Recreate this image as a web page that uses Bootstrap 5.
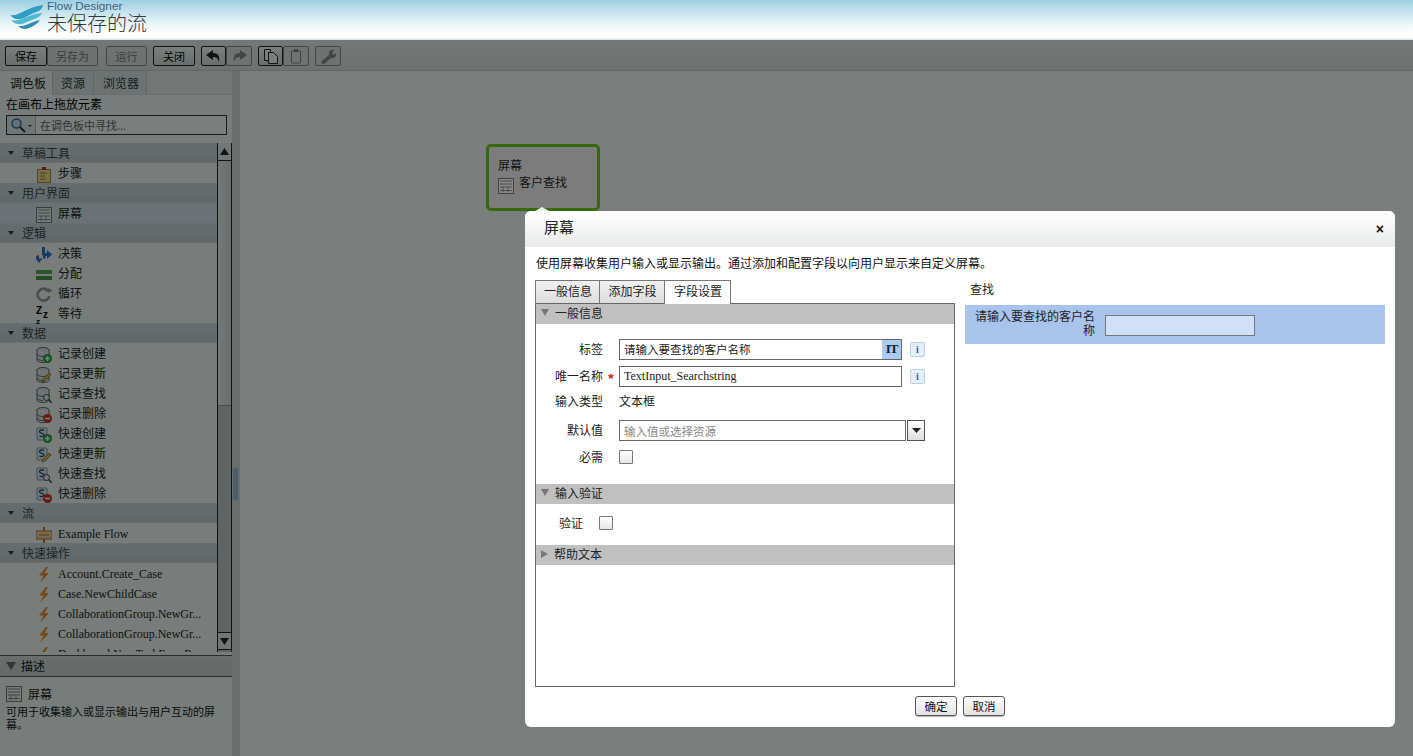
<!doctype html>
<html lang="zh">
<head>
<meta charset="utf-8">
<title>Flow Designer</title>
<link href="https://cdn.jsdelivr.net/npm/bootstrap@5.3.0/dist/css/bootstrap.min.css" rel="stylesheet">
<style>
html,body{height:756px;overflow:hidden}
body{background:#fff;font:12px/1.3 "Liberation Serif","Noto Sans CJK SC",serif;color:#111;position:relative}
.fd-head{height:40px;background:linear-gradient(#9ccfe2 0,#c5e3ee 12px,#f4fafc 28px,#fff 34px,#fff 38px,#c9dce6 40px)}
.fd-logo{margin:4px 4px 0 9px}
.fd-brand{font:11.8px/12px "Liberation Sans",sans-serif;color:#3d5f80}
.fd-title{font:300 20px/22px "Noto Sans CJK SC",sans-serif;color:#33383c}
.fd-overlay{position:absolute;left:0;right:0;top:40px;bottom:0;background:rgba(0,8,4,.52);z-index:4}
.fd-bar{height:31px;padding:6px 0 0 5px;background:linear-gradient(#f2f2f2,#e4e6e6);border-bottom:1px solid #ccc;gap:6px}
.fd-tb{height:20px;width:25px;padding:0;border:1px solid #222;border-radius:2px;background:linear-gradient(#fff,#ddd);font:11px/18px "Noto Sans CJK SC",sans-serif;color:#000;display:flex;align-items:center;justify-content:center}
.fd-tb.is-off{border-color:#8a8a8a;color:#777;background:#e6e6e6}
.fd-tb.fd-tbw{width:42px}.fd-tb.fd-tbx{width:51px}
.fd-tb.fd-tbn{width:26px}
.fd-tb.fd-run{margin-left:2px;width:41px}
.fd-side{width:232px;height:685px;background:#fafafa;flex:none}
.fd-split{width:8px;background:#dcdcdc;position:relative;flex:none}
.fd-grip{position:absolute;left:1px;top:397px;width:5px;height:32px;background:#9dbbdb;border-radius:2px}
.fd-canvas{flex:1;background:#fff}
.fd-tabs{height:24px;background:#eef0f0;border-bottom:1px solid #ddd}
.fd-tab{padding-top:4px;white-space:nowrap;font-size:12px;line-height:16px;color:#333;background:#e3e8ec;border-right:1px solid #ccc;font-family:"Noto Sans CJK SC",sans-serif}
.fd-tab.is-on{background:#fafafa;color:#222;width:53px;padding-left:10px;height:24px}
.fd-tab.fd-t2{width:41px;padding-left:8px}
.fd-tab.fd-t3{width:53px;padding-left:9px}
.fd-hint{height:19px;padding-left:6px;font:12px/18px "Noto Sans CJK SC",sans-serif;color:#000}
.fd-search{margin:1px 0 0 6px;width:221px;height:20px;border:1px solid #333;background:#fff;color:#666;font:11px/18px "Noto Sans CJK SC",sans-serif}
.fd-sico{width:29px;height:18px;background:#e8eef3;border-right:1px solid #bbb;padding-left:3px;flex:none}
.fd-palette{margin-top:8px;height:509px;overflow:hidden;position:relative}
.fd-plist{width:217px;height:509px;overflow:hidden}
.fd-sec{height:20px;background:linear-gradient(#d5dde6,#c9d1d9);border-bottom:1px solid #ddd;font:12px/19px "Noto Sans CJK SC",sans-serif;color:#444;padding-left:8px;gap:6px}
.fd-tri{width:0;height:0;border:3px solid transparent;border-top:4px solid #333;border-bottom:0;margin-right:2px}
.fd-row{height:20px;padding:3px 0 0 36px;font:12px/17px "Liberation Serif","Noto Sans CJK SC",serif;color:#222;white-space:nowrap}
.fd-row.is-sel{background:#dde7f1}
.fd-row svg{width:16px;height:16px;margin-right:6px;flex:none;overflow:visible}
.fd-row span{overflow:hidden;text-overflow:ellipsis}
.fd-sb{position:absolute;right:0;top:0;width:15px;height:509px;background:#c8c8c8;border-left:1px solid #222;border-right:1px solid #222}
.fd-sb-btn{height:18px;background:#eee;border-bottom:1px solid #222;display:flex;align-items:center;justify-content:center}
.fd-sb-thumb{height:245px;background:linear-gradient(90deg,#f4f4f4,#ddd);border-bottom:1px solid #999}
.fd-sb-dn{position:absolute;left:0;right:0;bottom:2px;border-top:1px solid #222;border-bottom:1px solid #222}
.fd-desch{height:22px;margin-top:3px;background:linear-gradient(#ddd,#cfd4d8);border-top:1px solid #555;border-bottom:1px solid #555;font:12px/20px "Noto Sans CJK SC",sans-serif;padding-left:6px;gap:5px;color:#111}
.fd-dtri{width:0;height:0;border:5px solid transparent;border-top:8px solid #666;border-bottom:0}
.fd-desc{padding:9px 6px 0;font:11px/13px "Noto Sans CJK SC",sans-serif;color:#111}
.fd-desc b{font-weight:400;font-size:12px;line-height:16px}
.fd-dtxt{margin-top:3px}
.fd-dgap{gap:6px}
.fd-node{position:absolute;left:486px;top:144px;width:114px;height:67px;border:3px solid #35680f;border-radius:5px;background:#7d7c7c;z-index:5;font:12px/14px "Noto Sans CJK SC",sans-serif;color:#111;padding:11px 0 0 9px}
.fd-node svg{filter:brightness(.55);margin-top:6px}
.fd-nsub{gap:5px;line-height:12px}
.fd-nsub span{margin-top:4px}
.fd-modal{position:absolute;left:525px;top:211px;width:870px;height:516px;background:#fff;border-radius:6px;z-index:6;font:12px/16px "Noto Sans CJK SC",sans-serif;color:#222}
.fd-modal::before{content:"";position:absolute;left:10px;top:-4px;border:7px solid transparent;border-top:0;border-bottom:4px solid #f0f0f0}
.fd-mh{height:36px;border-radius:6px 6px 0 0;background:linear-gradient(#fff,#e8eaea);font-size:15px;line-height:32px;padding:0 11px 0 19px;color:#222}
.fd-x{font:700 14px/30px "Liberation Sans",sans-serif;color:#111;background:none;border:0;padding:0}
.fd-intro{padding:8px 0 0 11px;height:33px;font-size:12px;line-height:16px;color:#111}
.fd-cols{padding-left:10px;gap:10px}
.fd-left{width:420px;flex:none}
.fd-mtabs{height:23px;border:0;margin:0;flex-wrap:nowrap}
.fd-mtab{width:65px;height:23px;padding-left:1px;text-align:center;background:linear-gradient(#f1f1f1,#ddd);border:1px solid #777;border-bottom:0;line-height:20px;color:#222;cursor:default}
.fd-mtab+.fd-mtab{border-left:0}
.fd-mtab.is-on{width:66px;background:#fff;height:24px;position:relative;z-index:1}
.fd-panel{width:420px;height:384px;border:1px solid #666;background:#fff}
.fd-acc{height:20px;background:#c0c0c0;padding:0 0 3px 5px;gap:6px;line-height:16px;color:#222}
.fd-t{width:0;height:0;border:4px solid transparent;border-top:7px solid #777;border-bottom:0}
.fd-t.is-r{border:4px solid transparent;border-left:7px solid #777;border-right:0}
.fd-lbl{width:67px;text-align:right;flex:none;color:#222;padding-bottom:1px}
.fd-star{width:16px;flex:none;text-align:center;color:#c11;font-size:17px;line-height:20px;padding-top:6px}
.fd-form{padding-top:15px}
.fd-frow{height:21px;margin-bottom:6px}
.fd-frow.fd-ftype{height:14px;margin:7px 0 12px}
.fd-frow.fd-fdef{margin-bottom:9px}
.fd-fchk{height:14px}
.fd-in{height:21px;border:1px solid #666;padding:0 4px;font-size:11.5px;line-height:19px;color:#222;background:#fff}
.fd-w283{width:283px}.fd-w287{width:287px;color:#888;padding-top:1px}
.fd-latin{font:12px/19px "Liberation Serif",serif}
.fd-i{width:15px;height:15px;margin-left:8px;border:1px solid #b9cfe2;border-radius:2px;background:#e6f0fa;color:#2d5f9b;font:700 10px/13px "Liberation Serif",serif;text-align:center;flex:none}
.fd-cur{width:19px;height:19px;position:absolute;right:0;top:0;background:#aacbee;font:700 13px/18px "Liberation Serif",serif;text-align:center;letter-spacing:-1px;color:#123}
.fd-dd{width:18px;height:21px;margin-left:1px;border:1px solid #555;background:linear-gradient(#fff,#ddd);flex:none}
.fd-chk{width:14px;height:14px;border:1px solid #777;background:linear-gradient(#fff,#e6e6e6);border-radius:1px;margin:0;flex:none;appearance:none}
.fd-acc.fd-sp{margin-top:20px}
.fd-vrow{height:41px;padding:0 0 3px 23px}
.fd-vrow .fd-chk{margin-left:16px}
.fd-right{width:420px;flex:none;margin-top:-2px}
.fd-ptitle{padding-left:5px;height:27px;line-height:22px;font-size:12px}
.fd-band{height:39px;background:#a8c3ec;padding-top:4px}
.fd-plbl{width:130px;text-align:right;line-height:14px;color:#222;flex:none}
.fd-pin{width:150px;height:21px;margin:6px 0 0 10px;border:1px solid #777;background:#cfe0f8;flex:none}
.fd-foot{position:absolute;left:0;right:0;bottom:11px;padding-left:390px;gap:6px}
.fd-ok{width:42px;height:20px;padding:0;border:1px solid #555;border-radius:3px;background:linear-gradient(#fff,#e2e2e2);font:11.5px/18px "Noto Sans CJK SC",sans-serif;color:#111;box-shadow:0 1px 1px rgba(0,0,0,.3)}
</style>
</head>
<body>
<svg width="0" height="0" class="position-absolute">
<defs>
<symbol id="i-screen" viewBox="0 0 16 16"><rect x=".5" y=".5" width="15" height="15" fill="#f5f8fb" stroke="#777"/><path d="M2 3h12M2 6h12M2 9h12M2 12.500h12M5 9v5M10 9v5" stroke="#888" fill="none"/></symbol>
<symbol id="i-step" viewBox="0 0 16 16"><rect x="1.500" y="2.500" width="13" height="13" fill="#f7e394" stroke="#a88a4a"/><path d="M4 6h7M4 9h5M4 12h6" stroke="#b06a20"/><rect x="6" y="0" width="4" height="3" fill="#a33"/></symbol>
<symbol id="i-dec" viewBox="0 0 16 16"><path d="M6 0h3v6h2V3l5 4.500-5 4.500V9H9.500v2.500H7v-3H6zM0 9l3-1v3.500h3.500L3 16 0 12z" fill="#2d76c8"/></symbol>
<symbol id="i-asg" viewBox="0 0 16 16"><rect y="3" width="16" height="4" fill="#5ea85e"/><rect y="9" width="16" height="4" fill="#4c984c"/></symbol>
<symbol id="i-loop" viewBox="0 0 16 16"><path d="M13.500 9A6 6 0 1 1 12 3.500" fill="none" stroke="#999" stroke-width="2.600"/><path d="M9 3h7v1.500H9zM12 1l4 2-4 3z" fill="#999"/></symbol>
<symbol id="i-db" viewBox="0 0 16 16"><ellipse cx="7" cy="3" rx="6" ry="2.500" fill="#dbe2ea" stroke="#666"/><path d="M1 3v10c0 1.400 3 2.500 6 2.500s6-1 6-2.500V3M1 7c0 1.400 3 2.500 6 2.500s6-1 6-2.500M1 11c0 1.400 3 2.500 6 2.500" fill="#e8edf2" stroke="#666"/></symbol>
<symbol id="i-s" viewBox="0 0 16 16"><rect x="1" y="1" width="10" height="12" rx="1" fill="#e9eef4" stroke="#8a98a8"/><path d="M8 3.500C6 2.500 3.500 3 3.500 4.800S8 6 8 7.800 5 10 3.500 9" fill="none" stroke="#26456e" stroke-width="1.300"/></symbol>
<symbol id="i-plus" viewBox="0 0 16 16"><circle cx="11.500" cy="11.500" r="4.500" fill="#25a244"/><path d="M9 11.500h5M11.500 9v5" stroke="#fff" stroke-width="1.500"/></symbol>
<symbol id="i-minus" viewBox="0 0 16 16"><circle cx="11.500" cy="11.500" r="4.500" fill="#d8302c"/><path d="M9 11.500h5" stroke="#fff" stroke-width="1.500"/></symbol>
<symbol id="i-edit" viewBox="0 0 16 16"><path d="M15 8l-6 6-3 1 1-3 6-6z" fill="#e8b64a" stroke="#6a5020" stroke-width=".6"/></symbol>
<symbol id="i-find" viewBox="0 0 16 16"><circle cx="10.500" cy="10.500" r="3" fill="#eef3f8" stroke="#444"/><path d="M12.800 12.800L16 16" stroke="#444" stroke-width="1.500"/></symbol>
<symbol id="i-flow" viewBox="0 0 16 16"><rect y="4" width="16" height="8" fill="#f2d2a0" stroke="#b97a36"/><path d="M8 0v4M8 12v4" stroke="#d0762a" stroke-width="2"/><path d="M3 8h10" stroke="#b97a36"/></symbol>
<symbol id="i-bolt" viewBox="0 0 16 16"><path d="M10 0L3 8.500h4.500L4 16l9-10H8.500L12 0z" fill="#f0932b"/></symbol>
</defs>
</svg>

<header class="fd-head d-flex">
  <svg class="fd-logo" width="34" height="27" viewBox="0 0 34 27"><path d="M1 11C9 13 18 3 34 1c-1 5-4 6-9 8-6 2-11 7-17 6-3 0-5-2-7-4z" fill="#2f9ec2"/><path d="M2 16c8 3 17-6 31-7-2 4-5 5-10 7-6 2-9 5-14 4-3 0-5-2-7-4z" fill="#4fb8d2"/><path d="M9 22c7 1 12-4 22-6-3 4-6 6-11 8-4 2-8 1-11-2z" fill="#2f8fb2"/></svg>
  <div><div class="fd-brand">Flow Designer</div><div class="fd-title">未保存的流</div></div>
</header>

<nav class="fd-bar d-flex">
  <div class="d-flex"><button class="fd-tb fd-tbw">保存</button><button class="fd-tb is-off fd-tbx">另存为</button></div>
  <button class="fd-tb fd-run is-off">运行</button>
  <button class="fd-tb fd-tbw">关闭</button>
  <div class="d-flex"><button class="fd-tb" aria-label="撤销"><svg width="18" height="14" viewBox="0 0 18 14"><path d="M8 1L1 6l7 5V8c3 0 5 1 6 5 1-6-1-9-6-9z" fill="#222"/></svg></button><button class="fd-tb fd-tbn is-off" aria-label="重做"><svg width="18" height="14" viewBox="0 0 18 14"><path d="M10 1l7 5-7 5V8c-3 0-5 1-6 5-1-6 1-9 6-9z" fill="#888"/></svg></button></div>
  <div class="d-flex"><button class="fd-tb" aria-label="复制"><svg width="16" height="16" viewBox="0 0 16 16"><path d="M1.500 1.500h6v11h-6z" fill="#fff" stroke="#222"/><path d="M5.500 4.500h5l4 4v7h-9z" fill="#fff" stroke="#222"/></svg></button><button class="fd-tb fd-tbn is-off" aria-label="粘贴"><svg width="16" height="16" viewBox="0 0 16 16"><path d="M3.500 3h9v12h-9z" fill="none" stroke="#888"/><rect x="6" y="1" width="4" height="3" fill="#888"/></svg></button></div>
  <button class="fd-tb fd-tbn is-off" aria-label="设置"><svg width="16" height="16" viewBox="0 0 16 16"><path d="M1 15l1-2 7-6c-1-3 2-6 5-5l-2 3 2 2 2-2c1 3-2 6-5 5l-7 6z" fill="#888"/></svg></button>
</nav>

<main class="d-flex">
  <aside class="fd-side">
    <div class="fd-tabs d-flex"><div class="fd-tab is-on">调色板</div><div class="fd-tab fd-t2">资源</div><div class="fd-tab fd-t3">浏览器</div></div>
    <div class="fd-hint">在画布上拖放元素</div>
    <div class="fd-search d-flex align-items-center">
      <div class="fd-sico d-flex align-items-center"><svg width="24" height="16" viewBox="0 0 24 16"><circle cx="6.500" cy="6.500" r="4.500" fill="#cfe2f5" stroke="#3c6c9c" stroke-width="1.500"/><path d="M10 10l5 5" stroke="#333" stroke-width="2"/><path d="M18 8h4l-2 2z" fill="#333"/></svg></div>
      <span class="ps-1">在调色板中寻找...</span>
    </div>
    <div class="fd-palette">
      <div class="fd-plist">
        <div class="fd-sec d-flex align-items-center"><i class="fd-tri"></i>草稿工具</div>
        <div class="fd-row d-flex align-items-center"><svg><use href="#i-step"/></svg><span>步骤</span></div>
        <div class="fd-sec d-flex align-items-center"><i class="fd-tri"></i>用户界面</div>
        <div class="fd-row is-sel d-flex align-items-center"><svg><use href="#i-screen"/></svg><span>屏幕</span></div>
        <div class="fd-sec d-flex align-items-center"><i class="fd-tri"></i>逻辑</div>
        <div class="fd-row d-flex align-items-center"><svg><use href="#i-dec"/></svg><span>决策</span></div>
        <div class="fd-row d-flex align-items-center"><svg><use href="#i-asg"/></svg><span>分配</span></div>
        <div class="fd-row d-flex align-items-center"><svg><use href="#i-loop"/></svg><span>循环</span></div>
        <div class="fd-row d-flex align-items-center"><svg viewBox="0 0 16 16"><text x="0" y="7" font-family="Liberation Sans" font-weight="700" font-size="10" fill="#000">Z</text><text x="7" y="11" font-family="Liberation Sans" font-weight="700" font-size="10" fill="#000">z</text><text x="0" y="17" font-family="Liberation Sans" font-weight="700" font-size="8" fill="#000">z</text></svg><span>等待</span></div>
        <div class="fd-sec d-flex align-items-center"><i class="fd-tri"></i>数据</div>
        <div class="fd-row d-flex align-items-center"><svg><use href="#i-db"/><use href="#i-plus"/></svg><span>记录创建</span></div>
        <div class="fd-row d-flex align-items-center"><svg><use href="#i-db"/><use href="#i-edit"/></svg><span>记录更新</span></div>
        <div class="fd-row d-flex align-items-center"><svg><use href="#i-db"/><use href="#i-find"/></svg><span>记录查找</span></div>
        <div class="fd-row d-flex align-items-center"><svg><use href="#i-db"/><use href="#i-minus"/></svg><span>记录删除</span></div>
        <div class="fd-row d-flex align-items-center"><svg><use href="#i-s"/><use href="#i-plus"/></svg><span>快速创建</span></div>
        <div class="fd-row d-flex align-items-center"><svg><use href="#i-s"/><use href="#i-edit"/></svg><span>快速更新</span></div>
        <div class="fd-row d-flex align-items-center"><svg><use href="#i-s"/><use href="#i-find"/></svg><span>快速查找</span></div>
        <div class="fd-row d-flex align-items-center"><svg><use href="#i-s"/><use href="#i-minus"/></svg><span>快速删除</span></div>
        <div class="fd-sec d-flex align-items-center"><i class="fd-tri"></i>流</div>
        <div class="fd-row d-flex align-items-center"><svg><use href="#i-flow"/></svg><span>Example Flow</span></div>
        <div class="fd-sec d-flex align-items-center"><i class="fd-tri"></i>快速操作</div>
        <div class="fd-row d-flex align-items-center"><svg><use href="#i-bolt"/></svg><span>Account.Create_Case</span></div>
        <div class="fd-row d-flex align-items-center"><svg><use href="#i-bolt"/></svg><span>Case.NewChildCase</span></div>
        <div class="fd-row d-flex align-items-center"><svg><use href="#i-bolt"/></svg><span>CollaborationGroup.NewGr...</span></div>
        <div class="fd-row d-flex align-items-center"><svg><use href="#i-bolt"/></svg><span>CollaborationGroup.NewGr...</span></div>
        <div class="fd-row d-flex align-items-center"><svg><use href="#i-bolt"/></svg><span>Dashboard.NewTaskFromRe...</span></div>
      </div>
      <div class="fd-sb">
        <div class="fd-sb-btn"><svg width="9" height="7" viewBox="0 0 9 7"><path d="M4.500 0L9 7H0z" fill="#222"/></svg></div>
        <div class="fd-sb-thumb"></div>
        <div class="fd-sb-btn fd-sb-dn"><svg width="9" height="7" viewBox="0 0 9 7"><path d="M4.500 7L9 0H0z" fill="#222"/></svg></div>
      </div>
    </div>
    <div class="fd-desch d-flex align-items-center"><i class="fd-dtri"></i>描述</div>
    <div class="fd-desc">
      <div class="d-flex align-items-center fd-dgap"><svg width="16" height="16"><use href="#i-screen"/></svg><b>屏幕</b></div>
      <div class="fd-dtxt">可用于收集输入或显示输出与用户互动的屏幕。</div>
    </div>
  </aside>
  <div class="fd-split"><div class="fd-grip"></div></div>
  <section class="fd-canvas"></section>
</main>

<div class="fd-node">
  <div>屏幕</div>
  <div class="fd-nsub d-flex"><svg width="16" height="16"><use href="#i-screen"/></svg><span>客户查找</span></div>
</div>

<div class="fd-overlay"></div>

<div class="fd-modal">
  <div class="fd-mh d-flex justify-content-between"><span>屏幕</span><button class="fd-x" aria-label="关闭">×</button></div>
  <div class="fd-intro">使用屏幕收集用户输入或显示输出。通过添加和配置字段以向用户显示来自定义屏幕。</div>
  <div class="fd-cols d-flex">
    <div class="fd-left">
      <div class="fd-mtabs nav"><div class="fd-mtab">一般信息</div><div class="fd-mtab">添加字段</div><div class="fd-mtab is-on">字段设置</div></div>
      <div class="fd-panel">
        <div class="fd-acc d-flex align-items-center"><i class="fd-t"></i>一般信息</div>
        <div class="fd-form">
          <div class="fd-frow d-flex align-items-center"><div class="fd-lbl">标签</div><div class="fd-star"></div><div class="fd-in fd-w283 position-relative">请输入要查找的客户名称<span class="fd-cur">IT</span></div><div class="fd-i">i</div></div>
          <div class="fd-frow d-flex align-items-center"><div class="fd-lbl">唯一名称</div><div class="fd-star">*</div><div class="fd-in fd-latin fd-w283">TextInput_Searchstring</div><div class="fd-i">i</div></div>
          <div class="fd-frow fd-ftype d-flex align-items-center"><div class="fd-lbl">输入类型</div><div class="fd-star"></div><div>文本框</div></div>
          <div class="fd-frow fd-fdef d-flex align-items-center"><div class="fd-lbl">默认值</div><div class="fd-star"></div><div class="fd-in fd-w287">输入值或选择资源</div><div class="fd-dd d-flex align-items-center justify-content-center"><svg width="9" height="5" viewBox="0 0 9 5"><path d="M0 0h9L4.500 5z" fill="#222"/></svg></div></div>
          <div class="fd-fchk d-flex align-items-center"><div class="fd-lbl">必需</div><div class="fd-star"></div><input class="fd-chk" type="checkbox" aria-label="必需"></div>
        </div>
        <div class="fd-acc fd-sp d-flex align-items-center"><i class="fd-t"></i>输入验证</div>
        <div class="fd-vrow d-flex align-items-center"><span>验证</span><input class="fd-chk" type="checkbox" aria-label="验证"></div>
        <div class="fd-acc d-flex align-items-center"><i class="fd-t is-r"></i>帮助文本</div>
      </div>
    </div>
    <div class="fd-right">
      <div class="fd-ptitle">查找</div>
      <div class="fd-band d-flex"><div class="fd-plbl">请输入要查找的客户名称</div><div class="fd-pin"></div></div>
    </div>
  </div>
  <div class="fd-foot d-flex"><button class="fd-ok">确定</button><button class="fd-ok">取消</button></div>
</div>
<script src="https://cdn.jsdelivr.net/npm/bootstrap@5.3.0/dist/js/bootstrap.bundle.min.js"></script>
</body>
</html>
